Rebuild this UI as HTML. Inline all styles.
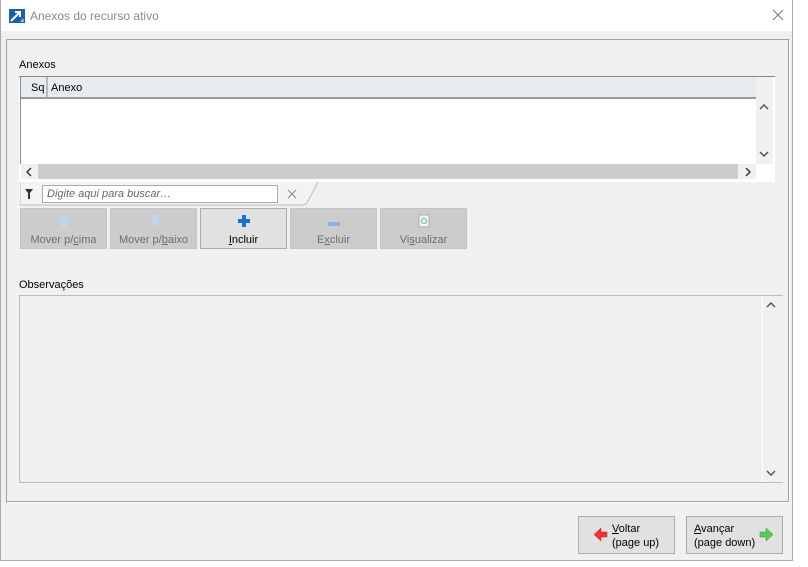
<!DOCTYPE html><html><head><style>
body{margin:0;width:808px;height:567px;background:#fff;font-family:"Liberation Sans",sans-serif;font-size:11px;color:#000;position:relative;overflow:hidden}
.a{position:absolute}
.btn{position:absolute;top:208px;width:87px;height:41px;background:#ccc;border:1px solid #c4c4c4;box-sizing:border-box;color:#6d6d6d;text-align:center;font-size:11px}
.btn .t{position:absolute;top:25px;left:0;right:0}
u{text-decoration:underline}
</style></head><body>
<div class="a" style="left:0;top:0;width:793px;height:561px;border:1px solid #aaa;border-top:none;background:#f0f0f0;box-sizing:border-box"></div>
<div class="a" style="left:1px;top:0;width:791px;height:31px;background:#fff"></div>
<svg class="a" style="left:9px;top:9px" width="16" height="14"><rect width="16" height="14" fill="#1c5fa8"/><path d="M2 12 L10 4 M6 3 H11 V8" stroke="#fff" stroke-width="2" fill="none"/><path d="M11 13 L14 9 L15 13Z" fill="#9cc"/></svg>
<div class="a" style="left:30px;top:9px;font-size:12px;color:#8a8a8a">Anexos do recurso ativo</div>
<svg class="a" style="left:772px;top:9px" width="12" height="12"><path d="M1 1L11 11M11 1L1 11" stroke="#777" stroke-width="1"/></svg>
<div class="a" style="left:6px;top:39px;width:784px;height:464px;border:1px solid #a0a0a0;border-right-color:#fff;border-bottom-color:#fff;box-sizing:border-box;box-shadow:inset -1px -1px 0 #a0a0a0"></div>
<div class="a" style="left:19px;top:59px">Anexos</div>
<div class="a" style="left:19px;top:76px;width:756px;height:106px;background:#fff;border-top:1px solid #888"></div>
<div class="a" style="left:21px;top:77px;width:735px;height:20px;background:#e8ecef;border-bottom:2px solid #999"></div>
<div class="a" style="left:46px;top:77px;width:2px;height:20px;background:#bbb"></div>
<div class="a" style="left:31px;top:82px">Sq</div>
<div class="a" style="left:51px;top:82px">Anexo</div>
<div class="a" style="left:20px;top:77px;width:1px;height:87px;background:#888"></div>
<div class="a" style="left:756px;top:77px;width:17px;height:87px;background:#f0f0f0"></div>
<svg class="a" style="left:759px;top:104px" width="10" height="6"><path d="M1 5L5 1L9 5" stroke="#555" stroke-width="1.5" fill="none"/></svg>
<svg class="a" style="left:759px;top:151px" width="10" height="6"><path d="M1 1L5 5L9 1" stroke="#555" stroke-width="1.5" fill="none"/></svg>
<div class="a" style="left:21px;top:164px;width:735px;height:15px;background:#cdcdcd"></div>
<div class="a" style="left:21px;top:164px;width:17px;height:15px;background:#f0f0f0"></div>
<svg class="a" style="left:26px;top:167px" width="6" height="10"><path d="M5 1L1 5L5 9" stroke="#333" stroke-width="1.5" fill="none"/></svg>
<div class="a" style="left:738px;top:164px;width:18px;height:15px;background:#f0f0f0"></div>
<svg class="a" style="left:745px;top:167px" width="6" height="10"><path d="M1 1L5 5L1 9" stroke="#333" stroke-width="1.5" fill="none"/></svg>
<div class="a" style="left:20px;top:182px;width:754px;height:25px;background:#f0f0f0"></div>
<svg class="a" style="left:20px;top:182px" width="300" height="26"><path d="M0 0 V23 H282 Q286 23 288 19 L298 0" fill="#f3f3f3" stroke="#bbb"/><path d="M5 7 H13 L10 11 V17 H8 V11Z" fill="#333"/><path d="M268 8 l8 8 M276 8 l-8 8" stroke="#888"/></svg>
<div class="a" style="left:42px;top:185px;width:236px;height:18px;border:1px solid #aaa;background:#fff;box-sizing:border-box;color:#666;font-style:italic;padding:2px 4px">Digite aqui para buscar…</div>
<div class="btn" style="left:20px"><svg class="a" style="left:36px;top:6px" width="14" height="14"><path d="M7 1 L13 7 H10 V13 H4 V7 H1Z" fill="#bcd6ee"/></svg><div class="t">Mover p/<u>c</u>ima</div></div>
<div class="btn" style="left:110px"><svg class="a" style="left:37px;top:5px" width="14" height="14"><path d="M7 13 L13 7 H10 V1 H4 V7 H1Z" fill="#bcd6ee"/></svg><div class="t">Mover p/<u>b</u>aixo</div></div>
<div class="btn" style="left:200px;background:#e1e1e1;border-color:#adadad;color:#000"><svg class="a" style="left:37px;top:6px" width="12" height="12"><path d="M4 0H8V4H12V8H8V12H4V8H0V4H4Z" fill="#1e6ed8"/></svg><div class="t"><u>I</u>ncluir</div></div>
<div class="btn" style="left:290px"><div class="a" style="left:37px;top:13px;width:12px;height:4px;background:#8fb2dc"></div><div class="t">E<u>x</u>cluir</div></div>
<div class="btn" style="left:380px"><svg class="a" style="left:37px;top:5px" width="12" height="14"><rect x="1" y="1" width="10" height="12" fill="#f4f4f4" stroke="#aaa"/><circle cx="6" cy="7" r="2.5" fill="none" stroke="#6aa"/></svg><div class="t">Vi<u>s</u>ualizar</div></div>
<div class="a" style="left:19px;top:279px">Observações</div>
<div class="a" style="left:19px;top:295px;width:764px;height:188px;border:1px solid #bbb;box-sizing:border-box;background:#f0f0f0"></div>
<div class="a" style="left:762px;top:296px;width:20px;height:186px;background:#f0f0f0;border-left:1px solid #fff"></div>
<svg class="a" style="left:766px;top:302px" width="10" height="6"><path d="M1 5L5 1L9 5" stroke="#555" stroke-width="1.5" fill="none"/></svg>
<svg class="a" style="left:766px;top:470px" width="10" height="6"><path d="M1 1L5 5L9 1" stroke="#555" stroke-width="1.5" fill="none"/></svg>
<div class="a" style="left:578px;top:516px;width:97px;height:38px;background:#e1e1e1;border:1px solid #adadad;box-sizing:border-box"><svg class="a" style="left:15px;top:11px" width="14" height="13"><path d="M0 6.5 L7 0 V4 H13 V9 H7 V13Z" fill="#e33" stroke="#b22" stroke-width=".5"/></svg><div class="a" style="left:33px;top:5px;line-height:14px"><u>V</u>oltar<br>(page up)</div></div>
<div class="a" style="left:686px;top:516px;width:97px;height:38px;background:#e1e1e1;border:1px solid #adadad;box-sizing:border-box"><div class="a" style="left:7px;top:5px;line-height:14px"><u>A</u>vançar<br>(page down)</div><svg class="a" style="left:72px;top:11px" width="14" height="13"><path d="M14 6.5 L7 0 V4 H1 V9 H7 V13Z" fill="#5c5" stroke="#393" stroke-width=".5"/></svg></div>
</body></html>
